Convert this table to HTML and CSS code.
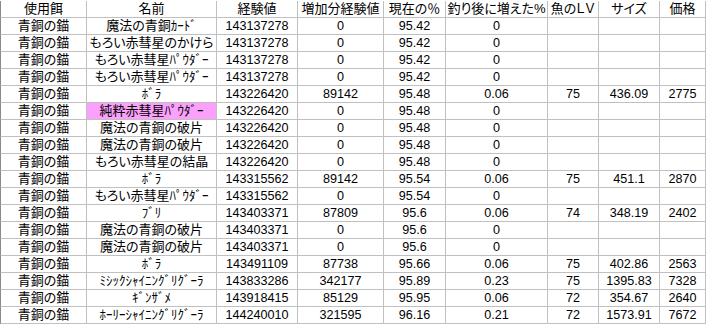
FILE: index.html
```html
<!DOCTYPE html>
<html lang="ja">
<head>
<meta charset="utf-8">
<title>青銅の錨</title>
<link rel="stylesheet" href="styles.css">
</head>
<body>
<div class="sheet">
  <div class="c first">使用餌</div><div class="c">名前</div><div class="c">経験値</div><div class="c">増加分経験値</div><div class="c">現在の％</div><div class="c">釣り後に増えた%</div><div class="c">魚のＬＶ</div><div class="c">サイズ</div><div class="c">価格</div>

  <div class="c first">青銅の錨</div><div class="c">魔法の青銅<span class="hw">ｶｰﾄﾞ</span></div><div class="c n">143137278</div><div class="c n">0</div><div class="c n">95.42</div><div class="c n">0</div><div class="c n"></div><div class="c n"></div><div class="c n"></div>
  <div class="c first">青銅の錨</div><div class="c">もろい赤彗星のかけら</div><div class="c n">143137278</div><div class="c n">0</div><div class="c n">95.42</div><div class="c n">0</div><div class="c n"></div><div class="c n"></div><div class="c n"></div>
  <div class="c first">青銅の錨</div><div class="c">もろい赤彗星<span class="hw">ﾊﾟｳﾀﾞｰ</span></div><div class="c n">143137278</div><div class="c n">0</div><div class="c n">95.42</div><div class="c n">0</div><div class="c n"></div><div class="c n"></div><div class="c n"></div>
  <div class="c first">青銅の錨</div><div class="c">もろい赤彗星<span class="hw">ﾊﾟｳﾀﾞｰ</span></div><div class="c n">143137278</div><div class="c n">0</div><div class="c n">95.42</div><div class="c n">0</div><div class="c n"></div><div class="c n"></div><div class="c n"></div>
  <div class="c first">青銅の錨</div><div class="c"><span class="hw">ﾎﾞﾗ</span></div><div class="c n">143226420</div><div class="c n">89142</div><div class="c n">95.48</div><div class="c n">0.06</div><div class="c n">75</div><div class="c n">436.09</div><div class="c n">2775</div>
  <div class="c first">青銅の錨</div><div class="c pink">純粋赤彗星<span class="hw">ﾊﾟｳﾀﾞｰ</span></div><div class="c n">143226420</div><div class="c n">0</div><div class="c n">95.48</div><div class="c n">0</div><div class="c n"></div><div class="c n"></div><div class="c n"></div>
  <div class="c first">青銅の錨</div><div class="c">魔法の青銅の破片</div><div class="c n">143226420</div><div class="c n">0</div><div class="c n">95.48</div><div class="c n">0</div><div class="c n"></div><div class="c n"></div><div class="c n"></div>
  <div class="c first">青銅の錨</div><div class="c">魔法の青銅の破片</div><div class="c n">143226420</div><div class="c n">0</div><div class="c n">95.48</div><div class="c n">0</div><div class="c n"></div><div class="c n"></div><div class="c n"></div>
  <div class="c first">青銅の錨</div><div class="c">もろい赤彗星の結晶</div><div class="c n">143226420</div><div class="c n">0</div><div class="c n">95.48</div><div class="c n">0</div><div class="c n"></div><div class="c n"></div><div class="c n"></div>
  <div class="c first">青銅の錨</div><div class="c"><span class="hw">ﾎﾞﾗ</span></div><div class="c n">143315562</div><div class="c n">89142</div><div class="c n">95.54</div><div class="c n">0.06</div><div class="c n">75</div><div class="c n">451.1</div><div class="c n">2870</div>
  <div class="c first">青銅の錨</div><div class="c">もろい赤彗星<span class="hw">ﾊﾟｳﾀﾞｰ</span></div><div class="c n">143315562</div><div class="c n">0</div><div class="c n">95.54</div><div class="c n">0</div><div class="c n"></div><div class="c n"></div><div class="c n"></div>
  <div class="c first">青銅の錨</div><div class="c"><span class="hw">ﾌﾞﾘ</span></div><div class="c n">143403371</div><div class="c n">87809</div><div class="c n">95.6</div><div class="c n">0.06</div><div class="c n">74</div><div class="c n">348.19</div><div class="c n">2402</div>
  <div class="c first">青銅の錨</div><div class="c">魔法の青銅の破片</div><div class="c n">143403371</div><div class="c n">0</div><div class="c n">95.6</div><div class="c n">0</div><div class="c n"></div><div class="c n"></div><div class="c n"></div>
  <div class="c first">青銅の錨</div><div class="c">魔法の青銅の破片</div><div class="c n">143403371</div><div class="c n">0</div><div class="c n">95.6</div><div class="c n">0</div><div class="c n"></div><div class="c n"></div><div class="c n"></div>
  <div class="c first">青銅の錨</div><div class="c"><span class="hw">ﾎﾞﾗ</span></div><div class="c n">143491109</div><div class="c n">87738</div><div class="c n">95.66</div><div class="c n">0.06</div><div class="c n">75</div><div class="c n">402.86</div><div class="c n">2563</div>
  <div class="c first">青銅の錨</div><div class="c"><span class="hw">ﾐｼｯｸｼｬｲﾆﾝｸﾞﾘｸﾞｰﾗ</span></div><div class="c n">143833286</div><div class="c n">342177</div><div class="c n">95.89</div><div class="c n">0.23</div><div class="c n">75</div><div class="c n">1395.83</div><div class="c n">7328</div>
  <div class="c first">青銅の錨</div><div class="c"><span class="hw">ｷﾞﾝｻﾞﾒ</span></div><div class="c n">143918415</div><div class="c n">85129</div><div class="c n">95.95</div><div class="c n">0.06</div><div class="c n">72</div><div class="c n">354.67</div><div class="c n">2640</div>
  <div class="c first">青銅の錨</div><div class="c"><span class="hw">ﾎｰﾘｰｼｬｲﾆﾝｸﾞﾘｸﾞｰﾗ</span></div><div class="c n">144240010</div><div class="c n">321595</div><div class="c n">96.16</div><div class="c n">0.21</div><div class="c n">72</div><div class="c n">1573.91</div><div class="c n">7672</div>
</div>
</body>
</html>
```

FILE: styles.css
```css
html, body {
  margin: 0;
  padding: 0;
  background: #ffffff;
}

.sheet {
  display: grid;
  grid-template-columns: 87px 130px 81px 86px 62px 102px 51px 61px 46px;
  grid-auto-rows: 17px;
  padding-top: 1px;
  width: 706px;
  font-family: "Liberation Sans", "Noto Sans CJK JP", sans-serif;
  font-size: 13px;
  color: #000000;
}

.c {
  box-sizing: border-box;
  border-right: 1px solid #c0c0c0;
  border-bottom: 1px solid #c0c0c0;
  text-align: center;
  line-height: 16px;
  white-space: nowrap;
  overflow: visible;
  font-feature-settings: "palt";
}

.hw {
  font-feature-settings: normal;
}

.first {
  border-left: 1px solid #8a8a8a;
}

.n {
  font-size: 12.6px;
}

.pink {
  background: #fba0fb;
}
```
